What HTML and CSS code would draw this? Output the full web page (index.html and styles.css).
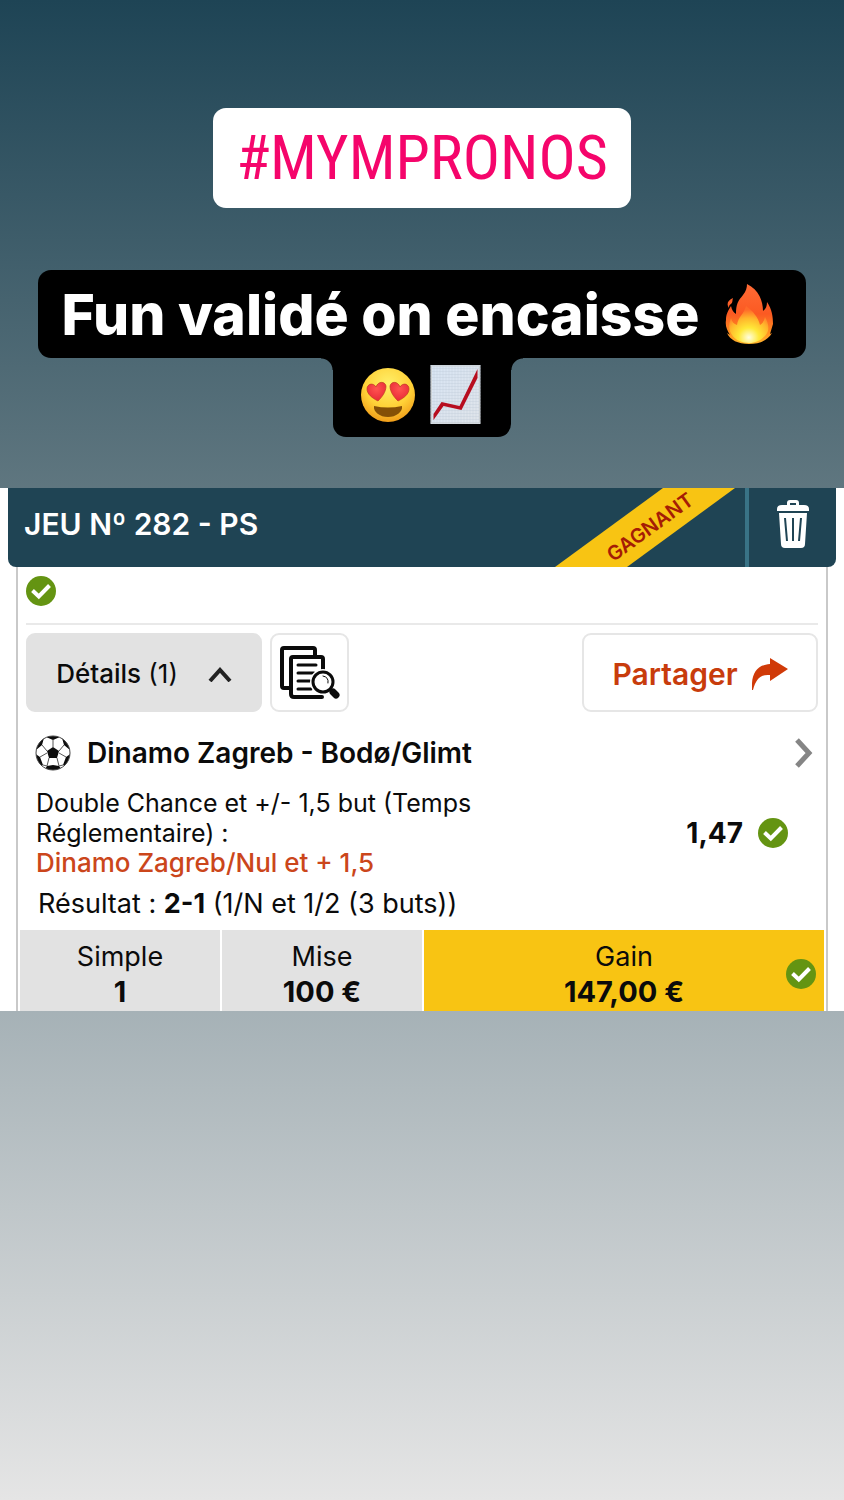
FILE: index.html
```html
<!DOCTYPE html>
<html lang="fr">
<head>
<meta charset="utf-8">
<meta name="viewport" content="width=device-width, initial-scale=1">
<title>Jeu N° 282 - PS</title>
<link rel="stylesheet" href="styles.css">
</head>
<body>
<svg class="defs" width="0" height="0" aria-hidden="true">
  <symbol id="check" viewBox="0 0 30 30">
    <circle cx="15" cy="15" r="15" fill="#649412"/>
    <path d="M6.5 14.5 12.8 20.5 23.5 9.5" fill="none" stroke="#fff" stroke-width="4"/>
  </symbol>
</svg>
<main class="story">
  <header class="intro">
    <h1 class="hashtag">#MYMPRONOS</h1>
    <div class="caption">
      <p class="caption-line">Fun validé on encaisse
        <svg class="fire" viewBox="0 0 50 60" role="img" aria-label="Feu">
          <defs>
            <linearGradient id="flame" x1="0" y1="0" x2="0" y2="1"><stop offset="0" stop-color="#ff6a35"/><stop offset=".5" stop-color="#fb5a22"/><stop offset=".8" stop-color="#ff8d20"/><stop offset="1" stop-color="#ffb52d"/></linearGradient>
            <radialGradient id="core" cx=".5" cy=".85" r=".75"><stop offset="0" stop-color="#fffde0"/><stop offset=".35" stop-color="#ffe838"/><stop offset=".7" stop-color="#ffb52b"/><stop offset="1" stop-color="#ff6a29"/></radialGradient>
          </defs>
          <path d="M23 0C35 6 39 17 39 27c3-2 4-5 4-9 5 7 6 15 6 22-1 3-2 7-3 10l2-1c-4 7-12 11-23 11S6 56 3 49l3 2C3 46 1 42 2 36c0-6 2-9 5-14 1 4 2 6 5 8 0-10 2-13 7-19 3-4 4-7 4-11ZM9 14c-1 3 0 4-2 6-2 1-2 2-2 4-3-4-1-8 4-10Z" fill="url(#flame)"/>
          <path d="M22 22c7 5 12 11 14 19 3-2 4-4 5-8 4 7 5 14 0 19-4 4-9 7-16 7S11 56 8 51c-4-6-3-12-1-17 1 4 3 6 6 7 1-8 7-11 9-19Z" fill="url(#core)"/>
        </svg>
      </p>
      <p class="caption-line caption-tail">
        <svg class="face" viewBox="0 0 54 54" role="img" aria-label="Yeux en cœur">
          <defs>
            <radialGradient id="skin" cx=".5" cy=".3" r=".72"><stop offset="0" stop-color="#fff06a"/><stop offset=".6" stop-color="#ffd137"/><stop offset="1" stop-color="#f09a18"/></radialGradient>
            <radialGradient id="heart" cx=".5" cy=".35" r=".7"><stop offset="0" stop-color="#ff5450"/><stop offset="1" stop-color="#e62635"/></radialGradient>
          </defs>
          <circle cx="27" cy="27" r="27" fill="url(#skin)"/>
          <path d="M17 33C11 30 6 26 6 21c0-5 6-7 9-2 2-6 9-6 10-1 0 6-4 11-8 15Z" fill="url(#heart)" stroke="#bd3c20" stroke-width=".7"/>
          <path d="M37 33c6-3 11-7 11-12 0-5-6-7-9-2-2-6-9-6-10-1 0 6 4 11 8 15Z" fill="url(#heart)" stroke="#bd3c20" stroke-width=".7"/>
          <path d="M13 38q14 3 28 0c1 6-6 11-14 11s-15-5-14-11Z" fill="#855006"/>
        </svg>
        <svg class="chart" viewBox="0 0 50 59" role="img" aria-label="Courbe en hausse">
          <defs>
            <linearGradient id="paper" x1="0" y1="0" x2="1" y2="1"><stop offset="0" stop-color="#d8e5f4"/><stop offset="1" stop-color="#e0e4ea"/></linearGradient>
            <pattern id="grid" width="3" height="3" patternUnits="userSpaceOnUse"><path d="M0 0H3M0 0V3" stroke="#b7c6d3" stroke-width=".6"/></pattern>
          </defs>
          <path d="M0 0H50V59H0Z" fill="url(#paper)"/>
          <path d="M0 0H50V59H0Z" fill="url(#grid)"/>
          <path d="M1 1H49V58H1Z" fill="none" stroke="#cbd0d3"/>
          <path d="M3 55V49L11 37 29 41 47 4V13L31 45 13 41Z" fill="#b70d1f"/>
        </svg>
      </p>
    </div>
  </header>

  <article class="ticket">
    <header class="ticket-head">
      <h2 class="ticket-title">JEU Nº 282 - PS</h2>
      <div class="ribbon-area">
        <svg class="ribbon" viewBox="0 0 180 79" role="img" aria-label="Gagnant">
          <path d="M0 79 108 0H180L72 79Z" fill="#f8c413"/>
          <text class="ribbon-text" x="95" y="46" transform="rotate(-36 95 39)" text-anchor="middle">GAGNANT</text>
        </svg>
      </div>
      <button class="delete" type="button" aria-label="Supprimer">
        <svg width="32" height="48" viewBox="0 0 32 48" fill="#fff" aria-hidden="true">
          <path fill-rule="evenodd" d="M10 5V3Q10 0 13 0h6q3 0 3 3v2h5q5 0 5 4v2H0V9Q0 5 5 5ZM13 5h6V3h-6Z"/>
          <path fill-rule="evenodd" d="M2 13H30L28 44q0 4-4 4H8q-4 0-4-4ZM7 18 9 41h2L9 18ZM15 18v23h2V18ZM23 18 21 41h2L25 18Z"/>
        </svg>
      </button>
    </header>

    <div class="ticket-body">
      <div class="status"><svg class="check" role="img" aria-label="Validé"><use href="#check"/></svg></div>
      <div class="actions">
        <button class="btn details" type="button" aria-expanded="true">
          <span><b>Détails</b> (1)</span>
          <svg width="24" height="16" viewBox="0 0 24 16" fill="none" stroke="#222" stroke-width="4" aria-hidden="true"><path d="M2 15 12 4 22 15"/></svg>
        </button>
        <button class="btn inspect" type="button" aria-label="Consulter le jeu">
          <svg width="60" height="54" viewBox="0 0 60 54" fill="none" stroke="#0b0b0b" stroke-width="4" stroke-linecap="round" stroke-linejoin="round" aria-hidden="true">
            <path d="M35 9V4Q35 2 33 2H4Q2 2 2 4V40Q2 42 4 42H9"/>
            <path d="M43 24V13Q43 11 41 11H13Q11 11 11 13V48Q11 51 14 51H42"/>
            <path d="M18 19H36M18 27H34M18 35H30M18 43H31" stroke-width="3"/>
            <circle cx="43" cy="36" r="12" fill="#fff" stroke="#fff" stroke-width="2"/>
            <circle cx="43" cy="36" r="10" stroke-width="3"/>
            <path d="M43 30Q49 31 48 37" stroke-width="1"/>
            <path d="M50 43 53 46" stroke-width="2"/>
            <path d="M53 46 56 49" stroke-width="7"/>
          </svg>
        </button>
        <button class="btn share" type="button">
          <span>Partager</span>
          <svg width="36" height="32" viewBox="0 0 36 32" fill="#d03a08" aria-hidden="true"><path d="M0 32C-1 15 5 7 18 6V0L36 11 18 23V17C9 16 4 21 1 32Z"/></svg>
        </button>
      </div>

      <a class="match" href="#match">
        <svg class="ball" viewBox="0 0 36 36" aria-hidden="true">
          <clipPath id="round"><circle cx="18" cy="18" r="17"/></clipPath>
          <circle cx="18" cy="18" r="17" fill="#fff"/>
          <g clip-path="url(#round)">
            <path d="M18 12 24 16 22 23 14 23 12 16ZM11 2 18 5 25 2 26-1H10ZM27 3 29 10 35 15 38 8 31 0ZM9 3 7 10 1 15-2 8 5 0ZM37 18 31 22 28 30 33 33 39 23ZM-1 18 5 22 8 30 3 33-3 23ZM12 31 18 30 24 31 27 35 20 39 9 36Z" fill="#0c0c0c"/>
            <path d="M18 12V5M24 16 29 10M12 16 7 10M22 23 24 31M14 23 12 31M24 18 31 22M12 18 5 22M24 31 28 30M12 31 8 30" stroke="#555" stroke-width="1"/>
          </g>
          <circle cx="18" cy="18" r="17" fill="none" stroke="#444"/>
        </svg>
        <h3 class="teams">Dinamo Zagreb - Bodø/Glimt</h3>
        <svg width="18" height="30" viewBox="0 0 18 30" fill="none" stroke="#858585" stroke-width="5" aria-hidden="true"><path d="M2 2 14 15 2 28"/></svg>
      </a>

      <div class="bet">
        <p class="market">Double Chance et +/- 1,5 but (Temps Réglementaire) :<br><span class="pick">Dinamo Zagreb/Nul et + 1,5</span></p>
        <div class="odds"><b>1,47</b><svg class="check" role="img" aria-label="Validé"><use href="#check"/></svg></div>
      </div>
      <p class="result">Résultat : <b>2-1</b> (1/N et 1/2 (3 buts))</p>

      <dl class="totals">
        <div class="cell"><dt>Simple</dt><dd>1</dd></div>
        <div class="cell"><dt>Mise</dt><dd>100 €</dd></div>
        <div class="cell win"><dt>Gain</dt><dd>147,00 €</dd><svg class="check win-check" aria-hidden="true"><use href="#check"/></svg></div>
      </dl>
    </div>
  </article>
</main>
</body>
</html>
```
FILE: styles.css
```css
* { box-sizing: border-box; }

body {
  margin: 0;
  font-family: Inter, "Liberation Sans", sans-serif;
  font-size: 27px;
  color: #0b0b0b;
}

h1, h2, h3, p, dl, dd { margin: 0; }
button { font: inherit; color: inherit; cursor: pointer; }
svg { display: block; flex: none; }
.defs { position: absolute; }

.story {
  min-height: 100vh;
  background: linear-gradient(#1e4455 0, #607780 33%, #a5b1b6 67%, #e5e5e5 100%);
}

.intro {
  display: flex;
  flex-direction: column;
  align-items: center;
  gap: 62px;
  padding: 108px 16px 51px;
}

.hashtag {
  padding: 0 23px;
  border-radius: 13px;
  background: #fff;
  color: #f5056b;
  font-family: "Roboto Condensed", "Liberation Sans Narrow", Roboto, sans-serif;
  font-size: 62px;
  font-weight: 400;
  line-height: 100px;
}

.caption {
  display: flex;
  flex-direction: column;
  align-items: center;
  color: #fff;
  font-size: 57px;
  font-weight: 800;
}

.caption-line {
  display: flex;
  align-items: center;
  justify-content: center;
  gap: 25px;
  height: 88px;
  padding: 0 32px 0 24px;
  border-radius: 13px;
  background: #000;
  white-space: nowrap;
}

.caption-tail {
  position: relative;
  gap: 15px;
  height: 79px;
  padding: 0 30px 6px 28px;
  border-radius: 0 0 13px 13px;
}

.caption-tail::before,
.caption-tail::after {
  content: "";
  position: absolute;
  top: 0;
  width: 12px;
  height: 12px;
}
.caption-tail::before { right: 100%; background: radial-gradient(circle at 0 100%, transparent 11px, #000 12px); }
.caption-tail::after { left: 100%; background: radial-gradient(circle at 100% 100%, transparent 11px, #000 12px); }

.fire { width: 50px; height: 60px; }
.face { width: 54px; height: 54px; }
.chart { width: 51px; height: 59px; }

.ticket { padding: 0 8px; background: #fff; }

.ticket-head {
  display: flex;
  height: 79px;
  border-radius: 0 0 8px 8px;
  background: #1f4454;
  color: #fff;
}

.ticket-title {
  flex: 1;
  padding-left: 16px;
  font-size: 30px;
  font-weight: 600;
  line-height: 72px;
}

.ribbon-area { padding-right: 10px; }
.ribbon { width: 180px; height: 79px; overflow: hidden; }
.ribbon-text { fill: #a51c05; font-size: 20px; font-weight: 600; }

.delete {
  display: flex;
  justify-content: center;
  width: 91px;
  padding: 12px 0 0;
  border: 0;
  border-left: 4px solid #397386;
  background: none;
}

.ticket-body {
  margin: 0 8px;
  border: solid #c9c9c9;
  border-width: 0 2px;
}

.status {
  height: 58px;
  margin: 0 8px;
  padding-top: 9px;
  border-bottom: 2px solid #e9e9e9;
}

.check { width: 30px; height: 30px; }

.actions {
  display: flex;
  gap: 8px;
  padding: 8px 8px 0;
}

.btn {
  display: flex;
  align-items: center;
  justify-content: center;
  height: 79px;
  padding: 2px 0 0;
  border: 2px solid #e6e6e6;
  border-radius: 9px;
  background: #fff;
}

.details {
  gap: 30px;
  width: 236px;
  border-color: #e2e2e2;
  background: #e2e2e2;
  font-size: 26px;
}
.details b { font-weight: 500; }
.inspect { width: 79px; padding: 0; }

.share {
  gap: 14px;
  width: 236px;
  margin-left: auto;
  color: #c83c0c;
  font-size: 30px;
  font-weight: 600;
}

.match {
  display: flex;
  align-items: center;
  height: 81px;
  padding: 0 13px 0 17px;
  color: inherit;
  text-decoration: none;
}
.ball { width: 36px; height: 36px; }
.teams { flex: 1; margin-left: 16px; font-size: 28px; font-weight: 600; }

.bet {
  display: flex;
  align-items: center;
  justify-content: space-between;
  margin-top: -5px;
  padding: 0 38px 0 18px;
}
.market { max-width: 480px; font-size: 25px; line-height: 30px; }
.pick { color: #cb461b; font-size: 26px; font-weight: 500; }
.odds { display: flex; align-items: center; gap: 15px; font-size: 28px; }
.odds b { font-weight: 700; }

.result { padding: 6px 20px; line-height: 40px; }
.result b { font-weight: 700; }

.totals {
  display: grid;
  grid-template-columns: 1fr 1fr 2fr;
  gap: 2px;
  padding: 0 2px;
  line-height: 35px;
  text-align: center;
}
.cell { height: 81px; padding-top: 9px; background: #e2e2e2; }
.cell dd { font-size: 29px; font-weight: 700; }
.win { position: relative; background: #f8c413; }
.win-check { position: absolute; right: 8px; bottom: 22px; }
```
